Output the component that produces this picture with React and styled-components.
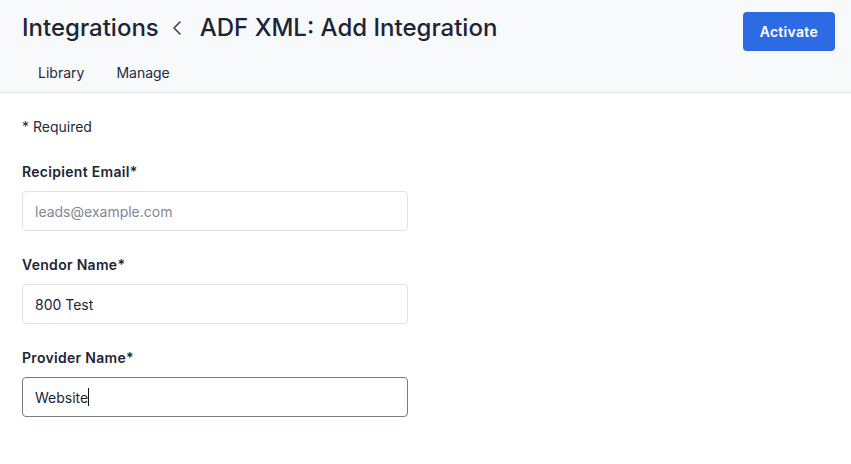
import React from 'react';
import styled, { createGlobalStyle } from 'styled-components';

const GlobalStyle = createGlobalStyle`
  html, body {
    margin: 0;
    padding: 0;
    background: #ffffff;
    font-family: Inter, "Noto Sans", sans-serif;
    color: #1d2739;
  }
  * {
    box-sizing: border-box;
  }
`;

const Page = styled.div`
  width: 100%;
  min-height: 100vh;
  background: #ffffff;
`;

const Header = styled.header`
  display: flex;
  flex-direction: column;
  height: 93px;
  padding: 12px 16px 0 22px;
  background: #f8f9fb;
  border-bottom: 1px solid #e3e5e8;
`;

const TopRow = styled.div`
  display: flex;
  align-items: flex-start;
  justify-content: space-between;
`;

const Breadcrumb = styled.h1`
  display: flex;
  align-items: center;
  margin: 1px 0 0;
  height: 30px;
  font-size: 24px;
  line-height: 30px;
  font-weight: 500;
  color: #1c2536;
`;

const Chevron = styled.svg`
  width: 16px;
  height: 16px;
  margin: 0 15px 0 10px;
  color: #3b4557;
`;

const Button = styled.button`
  height: 39px;
  padding: 0 17px;
  border: none;
  border-radius: 4px;
  background: #2d6be4;
  color: #ffffff;
  font-family: inherit;
  font-size: 14px;
  font-weight: 600;
  letter-spacing: 0.3px;
  cursor: pointer;
`;

const Tabs = styled.nav`
  display: flex;
  margin-top: 5px;
`;

const Tab = styled.a`
  display: flex;
  align-items: center;
  height: 32px;
  padding: 0 16px;
  font-size: 14px;
  color: #1f2a3d;
  text-decoration: none;
  cursor: pointer;
`;

const Body = styled.main`
  padding: 24px 22px;
`;

const Note = styled.p`
  margin: 0 0 25px;
  font-size: 14px;
  line-height: 20px;
  color: #1f2a3d;
`;

const Field = styled.div`
  display: flex;
  flex-direction: column;
  width: 386px;
  margin-bottom: 24px;
`;

const Label = styled.label`
  margin-bottom: 9px;
  font-size: 14px;
  line-height: 20px;
  font-weight: 600;
  letter-spacing: 0.3px;
  color: #1c2536;
`;

const Control = styled.div`
  position: relative;
  display: flex;
`;

const Input = styled.input`
  flex: 1;
  height: 40px;
  padding: 0 12px;
  border: 1px solid #dfe2e7;
  border-radius: 4px;
  background: #ffffff;
  font-family: inherit;
  font-size: 14px;
  color: #1c2536;
  caret-color: ${({ $focused }) => ($focused ? 'transparent' : '#111111')};
  outline: none;

  &::placeholder {
    color: #7f8796;
  }

  &:focus {
    border-color: #767b84;
  }
`;

/* steady text cursor drawn over the active field */
const CaretLayer = styled.div`
  position: absolute;
  inset: 0;
  display: flex;
  align-items: center;
  padding: 0 13px;
  font-size: 14px;
  pointer-events: none;
`;

const Ghost = styled.span`
  visibility: hidden;
  white-space: pre;
`;

const Caret = styled.span`
  width: 1px;
  height: 18px;
  background: #111111;
`;

const fields = [
  { id: 'email', label: 'Recipient Email*', placeholder: 'leads@example.com', value: '' },
  { id: 'vendor', label: 'Vendor Name*', value: '800 Test' },
  { id: 'provider', label: 'Provider Name*', value: 'Website', focus: true },
];

export default function App() {
  return (
    <Page>
      <GlobalStyle />
      <Header>
        <TopRow>
          <Breadcrumb>
            <span>Integrations</span>
            <Chevron viewBox="0 0 16 16" fill="none">
              <path d="M11 2 5 8l6 6" stroke="currentColor" strokeWidth="1.6" strokeLinecap="round" strokeLinejoin="round" />
            </Chevron>
            <span>ADF XML: Add Integration</span>
          </Breadcrumb>
          <Button>Activate</Button>
        </TopRow>
        <Tabs>
          <Tab>Library</Tab>
          <Tab>Manage</Tab>
        </Tabs>
      </Header>
      <Body>
        <Note>* Required</Note>
        {fields.map((f) => (
          <Field key={f.id}>
            <Label htmlFor={f.id}>{f.label}</Label>
            <Control>
              <Input
                id={f.id}
                placeholder={f.placeholder}
                defaultValue={f.value}
                autoFocus={f.focus}
                $focused={f.focus}
              />
              {f.focus && (
                <CaretLayer>
                  <Ghost>{f.value}</Ghost>
                  <Caret />
                </CaretLayer>
              )}
            </Control>
          </Field>
        ))}
      </Body>
    </Page>
  );
}
